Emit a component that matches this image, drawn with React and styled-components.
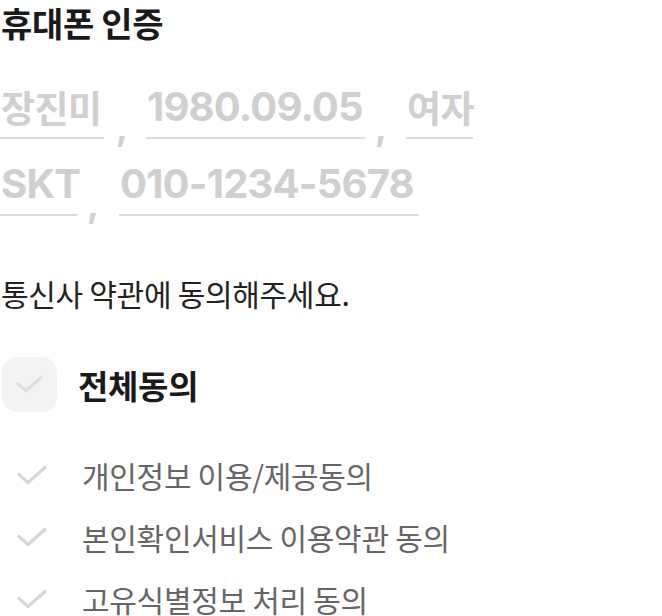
import React from "react";
import styled, { createGlobalStyle } from "styled-components";

const Global = createGlobalStyle`
  html, body { margin: 0; padding: 0; background: #fff; }
  body { font-family: "Noto Sans CJK KR", "Noto Sans", sans-serif; }
`;

const Page = styled.div`
  display: flex;
  flex-direction: column;
  width: 662px;
`;

const Title = styled.h1`
  margin: 0;
  padding-left: 1px;
  font-size: 34px;
  line-height: 46px;
  font-weight: 700;
  color: #1a1a1a;
  letter-spacing: -0.3px;
`;

const InfoBlock = styled.div`
  display: flex;
  flex-direction: column;
  gap: 20px;
  margin-top: 36px;
`;

const InfoRow = styled.div`
  display: flex;
  align-items: flex-end;
`;

const Field = styled.span`
  display: inline-block;
  font-family: ${(p) => (p.$ko ? '"Noto Sans CJK KR", sans-serif' : '"Inter", "Noto Sans CJK KR", sans-serif')};
  font-size: ${(p) => (p.$ko ? 37 : 40)}px;
  font-weight: 700;
  line-height: 50px;
  color: #d0d0d0;
  letter-spacing: ${(p) => (p.$ko ? -0.5 : -0.8)}px;
  padding-left: 1px;
  padding-bottom: 5px;
  border-bottom: 2px solid #dcdcdc;
  width: ${(p) => p.$w}px;
  box-sizing: border-box;
  white-space: nowrap;
`;

const Comma = styled.span`
  font-family: "Inter", sans-serif;
  font-size: 36px;
  font-weight: 700;
  line-height: 36px;
  color: #d0d0d0;
  width: ${(p) => p.$w}px;
  padding-left: ${(p) => p.$pl}px;
  box-sizing: border-box;
  transform: translateY(6px);
`;

const Notice = styled.p`
  margin: 57px 0 0 0;
  padding-left: 1px;
  font-size: 30px;
  line-height: 40px;
  color: #222;
  letter-spacing: -0.3px;
`;

const AllRow = styled.div`
  display: flex;
  align-items: center;
  gap: 21px;
  margin-top: 44px;
  padding-left: 2px;
`;

const CheckBox = styled.div`
  width: 55px;
  height: 55px;
  border-radius: 15px;
  background: #f3f3f3;
  display: flex;
  align-items: center;
  justify-content: center;
`;

const AllLabel = styled.span`
  font-size: 33px;
  line-height: 44px;
  font-weight: 700;
  color: #1a1a1a;
  letter-spacing: -0.3px;
`;

const List = styled.ul`
  list-style: none;
  margin: 43px 0 0 0;
  padding: 0;
  display: flex;
  flex-direction: column;
  gap: 22px;
`;

const Item = styled.li`
  display: flex;
  align-items: center;
  gap: 35px;
  padding-left: 17px;
  height: 40px;
`;

const ItemLabel = styled.span`
  font-size: 30px;
  line-height: 40px;
  color: #666;
  letter-spacing: -0.3px;
`;

const Check = ({ size = 30, color = "#d8d8d8" }) => (
  <svg width={size} height={size * 0.67} viewBox="0 0 30 20" fill="none">
    <path d="M2 9.5 L11 17.5 L28 2.5" stroke={color} strokeWidth="3.4" strokeLinecap="round" strokeLinejoin="round" />
  </svg>
);

const items = ["개인정보 이용/제공동의", "본인확인서비스 이용약관 동의", "고유식별정보 처리 동의"];

export default function App() {
  return (
    <Page>
      <Global />
      <Title>휴대폰 인증</Title>
      <InfoBlock>
        <InfoRow>
          <Field $ko $w={104}>장진미</Field>
          <Comma $w={42} $pl={12}>,</Comma>
          <Field $w={219}>1980.09.05</Field>
          <Comma $w={41} $pl={10}>,</Comma>
          <Field $ko $w={67}>여자</Field>
        </InfoRow>
        <InfoRow>
          <Field $w={77}>SKT</Field>
          <Comma $w={42} $pl={10}>,</Comma>
          <Field $w={300}>010-1234-5678</Field>
        </InfoRow>
      </InfoBlock>
      <Notice>통신사 약관에 동의해주세요.</Notice>
      <AllRow>
        <CheckBox>
          <Check size={27} color="#dedede" />
        </CheckBox>
        <AllLabel>전체동의</AllLabel>
      </AllRow>
      <List>
        {items.map((t) => (
          <Item key={t}>
            <Check size={30} color="#d8d8d8" />
            <ItemLabel>{t}</ItemLabel>
          </Item>
        ))}
      </List>
    </Page>
  );
}
